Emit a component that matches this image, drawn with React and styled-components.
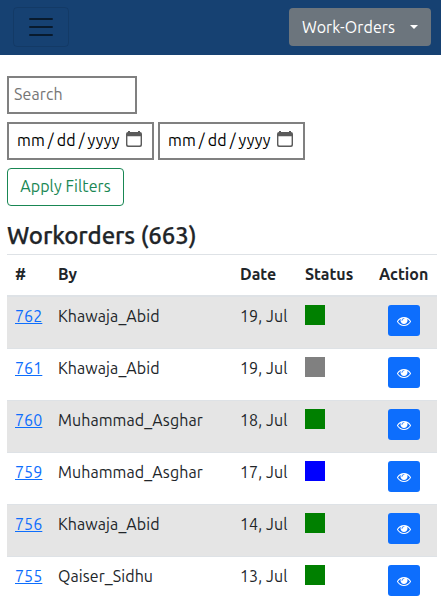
import React from 'react';
import styled, { createGlobalStyle } from 'styled-components';

const Global = createGlobalStyle`
  *, *::before, *::after { box-sizing: border-box; }
  body {
    margin: 0;
    height: 608px;
    overflow: hidden;
    background: #fff;
    color: #212529;
    font: 400 16px/24px Ubuntu, "Noto Sans", sans-serif;
  }
`;

const Navbar = styled.nav`
  display: flex;
  justify-content: space-between;
  height: 55px;
  padding: 8px 10px 0 13px;
  background: #164172;
`;

const Toggler = styled.button`
  width: 56px;
  height: 40px;
  margin-top: -1px;
  padding: 4px 12px;
  border: 1px solid rgba(0, 0, 0, 0.1);
  border-radius: 4px;
  background: transparent;
  svg { display: block; }
`;

const Dropdown = styled.button`
  display: flex;
  align-items: center;
  justify-content: space-between;
  width: 142px;
  height: 38px;
  padding: 0 13px;
  border: 0;
  border-radius: 4px;
  background: #6c757d;
  color: #fff;
  font: inherit;
  letter-spacing: 0.08px;
  white-space: nowrap;
`;

const Caret = styled.span`
  border: 4px solid transparent;
  border-top-color: #fff;
  border-bottom: 0;
`;

const Content = styled.main`
  padding: 21px 4px 0 7px;
`;

const Filters = styled.form`
  display: flex;
  flex-direction: column;
  align-items: flex-start;
  gap: 8px;
`;

const SearchInput = styled.input`
  width: 130px;
  height: 38px;
  padding: 0 5px 2px;
  border: 2px solid #808080;
  background: #fff;
  font: inherit;
  letter-spacing: 0.1px;
  &::placeholder { color: #757575; opacity: 1; }
`;

const DateRow = styled.div`
  display: flex;
  gap: 4px;
`;

const DateBox = styled.div`
  display: flex;
  align-items: center;
  justify-content: space-between;
  width: 147px;
  height: 38px;
  padding: 0 10px 0 8px;
  border: 2px solid #808080;
  background: #fff;
  color: #000;
  svg { margin-bottom: 4px; }
`;

const DateParts = styled.span`
  display: flex;
  gap: 3px;
  padding-bottom: 2px;
  letter-spacing: 0.08px;
`;

const ApplyButton = styled.button`
  width: 117px;
  height: 38px;
  padding: 0 0 2px;
  border: 1px solid #198754;
  border-radius: 4px;
  background: #fff;
  color: #198754;
  font: inherit;
  letter-spacing: 0.1px;
  white-space: nowrap;
`;

const Title = styled.h4`
  margin: 15px 0 4px;
  font-size: 24px;
  font-weight: 500;
  line-height: 29px;
  letter-spacing: -0.1px;
  -webkit-text-stroke: 0.25px currentColor;
`;

const Table = styled.table`
  width: 430px;
  table-layout: fixed;
  border-collapse: separate;
  border-spacing: 0;
  border-top: 1px solid #dee2e6;
`;

const Column = styled.col`
  width: ${(p) => p.$width}px;
`;

const HeadCell = styled.th`
  height: 42px;
  padding: 0 8px 2px;
  border-bottom: 2px solid #dee2e6;
  text-align: left;
  font-weight: 700;
`;

const Row = styled.tr`
  background: ${(p) => (p.$striped ? '#e5e5e5' : '#fff')};
`;

const Cell = styled.td`
  height: 52px;
  padding: 8px;
  border-bottom: 1px solid #dee2e6;
  vertical-align: top;
  white-space: nowrap;
`;

const TextCell = styled(Cell)`
  padding-top: 7px;
  letter-spacing: 0.08px;
`;

const OrderLink = styled.a`
  color: #0d6efd;
  text-decoration: underline;
`;

const Status = styled.div`
  width: 20px;
  height: 20px;
  background: ${(p) => p.$color};
`;

const ViewButton = styled.button`
  display: flex;
  justify-content: center;
  width: 32px;
  height: 31px;
  margin-left: 9px;
  padding: 9px 0 0;
  border: 0;
  border-radius: 3px;
  background: #0d6efd;
  color: #fff;
`;

const MenuIcon = () => (
  <svg width="30" height="30" viewBox="0 0 30 30" fill="none" stroke="rgba(0,0,0,.6)" strokeWidth="2" strokeLinecap="round">
    <path d="M4 7h22M4 15h22M4 23h22" />
  </svg>
);

const CalendarIcon = () => (
  <svg width="16" height="16" viewBox="0 0 16 16">
    <path fillRule="evenodd" fill="#5b5b5b" d="M2 1V0h2v1h8V0h2v1a2 2 0 0 1 2 2v11a2 2 0 0 1-2 2H2a2 2 0 0 1-2-2V3a2 2 0 0 1 2-2zM1.4 5.2v8.1a1.3 1.3 0 0 0 1.3 1.3h10.6a1.3 1.3 0 0 0 1.3-1.3V5.2z" />
  </svg>
);

const EyeIcon = () => (
  <svg width="14" height="14" viewBox="0 0 1792 1792" fill="currentColor">
    <path d="M1664 960q-152-236-381-353 61 104 61 225 0 185-131.5 316.5t-316.5 131.5-316.5-131.5-131.5-316.5q0-121 61-225-229 117-381 353 133 205 333.5 326.5t434.5 121.5 434.5-121.5 333.5-326.5zm-720-384q0-20-14-34t-34-14q-125 0-214.5 89.5t-89.5 214.5q0 20 14 34t34 14 34-14 14-34q0-86 61-147t147-61q20 0 34-14t14-34zm848 384q0 34-20 69-140 230-376.5 368.5t-499.5 138.5-499.5-139-376.5-368q-20-35-20-69t20-69q140-229 376.5-368t499.5-139 499.5 139 376.5 368q20 35 20 69z" />
  </svg>
);

const DateField = () => (
  <DateBox>
    <DateParts>
      <span>mm</span><span>/</span><span>dd</span><span>/</span><span>yyyy</span>
    </DateParts>
    <CalendarIcon />
  </DateBox>
);

const orders = [
  { id: 762, by: 'Khawaja_Abid', date: '19, Jul', color: 'green' },
  { id: 761, by: 'Khawaja_Abid', date: '19, Jul', color: 'gray' },
  { id: 760, by: 'Muhammad_Asghar', date: '18, Jul', color: 'green' },
  { id: 759, by: 'Muhammad_Asghar', date: '17, Jul', color: 'blue' },
  { id: 756, by: 'Khawaja_Abid', date: '14, Jul', color: 'green' },
  { id: 755, by: 'Qaiser_Sidhu', date: '13, Jul', color: 'green' },
];

export default function App() {
  return (
    <>
      <Global />
      <Navbar>
        <Toggler aria-label="Toggle navigation"><MenuIcon /></Toggler>
        <Dropdown>Work-Orders<Caret /></Dropdown>
      </Navbar>
      <Content>
        <Filters>
          <SearchInput placeholder="Search" />
          <DateRow><DateField /><DateField /></DateRow>
          <ApplyButton type="button">Apply Filters</ApplyButton>
        </Filters>
        <Title>Workorders (663)</Title>
        <Table>
          <colgroup>
            <Column $width={43} />
            <Column $width={182} />
            <Column $width={65} />
            <Column $width={74} />
            <Column $width={66} />
          </colgroup>
          <thead>
            <tr>
              <HeadCell>#</HeadCell>
              <HeadCell>By</HeadCell>
              <HeadCell>Date</HeadCell>
              <HeadCell>Status</HeadCell>
              <HeadCell>Action</HeadCell>
            </tr>
          </thead>
          <tbody>
            {orders.map((o, i) => (
              <Row key={o.id} $striped={i % 2 === 0}>
                <TextCell><OrderLink href="#">{o.id}</OrderLink></TextCell>
                <TextCell>{o.by}</TextCell>
                <TextCell>{o.date}</TextCell>
                <Cell><Status $color={o.color} /></Cell>
                <Cell><ViewButton aria-label="View"><EyeIcon /></ViewButton></Cell>
              </Row>
            ))}
          </tbody>
        </Table>
      </Content>
    </>
  );
}
